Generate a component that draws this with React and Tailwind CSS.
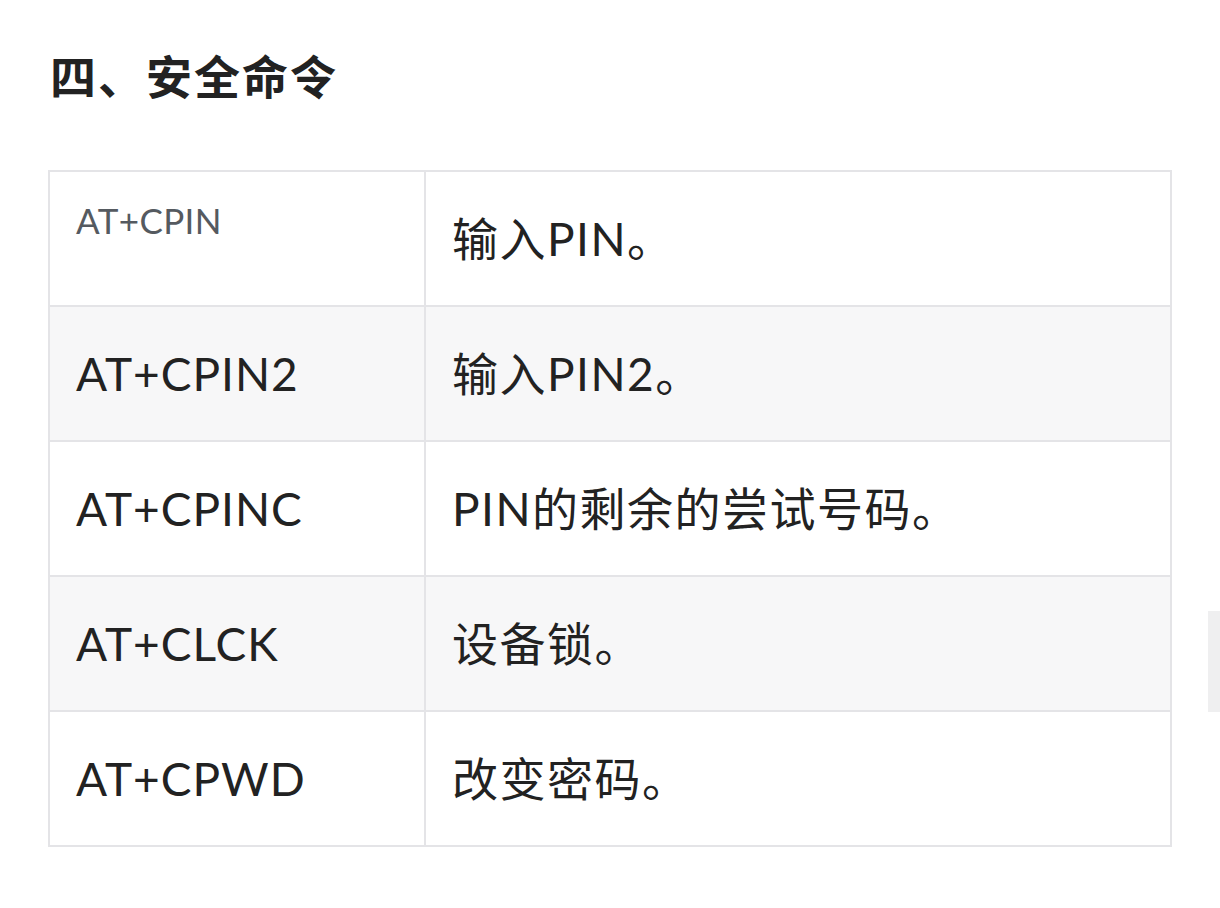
const rows = [
  { cmd: 'AT+CPIN', desc: '输入PIN。', first: true },
  { cmd: 'AT+CPIN2', desc: '输入PIN2。' },
  { cmd: 'AT+CPINC', desc: 'PIN的剩余的尝试号码。' },
  { cmd: 'AT+CLCK', desc: '设备锁。' },
  { cmd: 'AT+CPWD', desc: '改变密码。' },
]

export default function App() {
  return (
    <div className="flex min-h-[908px] w-[1220px] bg-white text-[#222] font-['Lato','Noto_Sans_CJK_SC',sans-serif]">
      <div className="w-[1172px] pl-[48px] pt-[46px]">
        <h2 className="pl-[2px] text-[46px] font-bold leading-[56px] tracking-[2px] font-['Noto_Sans_CJK_SC',sans-serif]">四、安全命令</h2>
        <table className="mt-[68px] w-[1124px] border-collapse">
          <tbody>
            {rows.map((r, i) => (
              <tr key={r.cmd} className={i % 2 === 1 ? 'bg-[#f7f7f8]' : 'bg-white'}>
                {r.first ? (
                  <td className="h-[135px] w-[376px] border-2 border-[#e4e4e7] px-[26px] pt-[26px] align-top text-[35px] leading-[44px] tracking-[0.4px] text-[#555a60]">
                    {r.cmd}
                  </td>
                ) : (
                  <td className="h-[135px] w-[376px] border-2 border-[#e4e4e7] px-[26px] align-middle text-[46px] leading-[56px] tracking-[1px]">
                    {r.cmd}
                  </td>
                )}
                <td className="h-[135px] border-2 border-[#e4e4e7] px-[26px] align-middle text-[46px] leading-[56px] tracking-[1.5px]">
                  {r.desc}
                </td>
              </tr>
            ))}
          </tbody>
        </table>
      </div>
      <div className="ml-auto mt-[611px] h-[101px] w-[12px] bg-[#efeff0]" />
    </div>
  )
}
